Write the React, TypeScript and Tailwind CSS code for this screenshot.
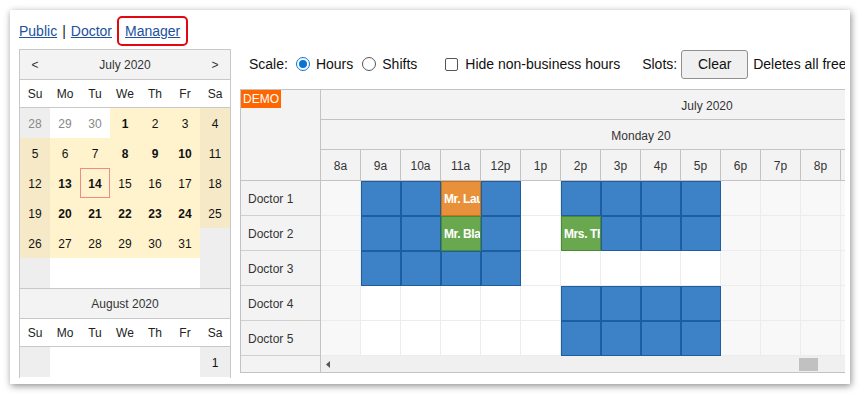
import React from "react";

type Cell = { d?: number; k: "in" | "inWe" | "out" | "outWe"; b?: boolean; t?: boolean; g?: boolean };

const july: Cell[][] = [
  [{ d: 28, k: "outWe", g: true }, { d: 29, k: "out", g: true }, { d: 30, k: "out", g: true }, { d: 1, k: "in", b: true }, { d: 2, k: "in" }, { d: 3, k: "in" }, { d: 4, k: "inWe" }],
  [{ d: 5, k: "inWe" }, { d: 6, k: "in" }, { d: 7, k: "in" }, { d: 8, k: "in", b: true }, { d: 9, k: "in", b: true }, { d: 10, k: "in", b: true }, { d: 11, k: "inWe" }],
  [{ d: 12, k: "inWe" }, { d: 13, k: "in", b: true }, { d: 14, k: "in", b: true, t: true }, { d: 15, k: "in" }, { d: 16, k: "in" }, { d: 17, k: "in" }, { d: 18, k: "inWe" }],
  [{ d: 19, k: "inWe" }, { d: 20, k: "in", b: true }, { d: 21, k: "in", b: true }, { d: 22, k: "in", b: true }, { d: 23, k: "in", b: true }, { d: 24, k: "in", b: true }, { d: 25, k: "inWe" }],
  [{ d: 26, k: "inWe" }, { d: 27, k: "in" }, { d: 28, k: "in" }, { d: 29, k: "in" }, { d: 30, k: "in" }, { d: 31, k: "in" }, { k: "outWe" }],
  [{ k: "outWe" }, { k: "out" }, { k: "out" }, { k: "out" }, { k: "out" }, { k: "out" }, { k: "outWe" }],
];

const august: Cell[][] = [
  [{ k: "outWe" }, { k: "out" }, { k: "out" }, { k: "out" }, { k: "out" }, { k: "out" }, { d: 1, k: "outWe" }],
];

const dayNames = ["Su", "Mo", "Tu", "We", "Th", "Fr", "Sa"];

function bgFor(k: Cell["k"]) {
  if (k === "in") return "bg-[#fff3ce]";
  if (k === "inWe") return "bg-[#f5e9c8]";
  if (k === "outWe") return "bg-[#eeeeee]";
  return "bg-white";
}

function Month({ title, nav, weeks, top }: { title: string; nav: boolean; weeks: Cell[][]; top?: boolean }) {
  return (
    <div className={top ? "" : "border-t border-[#c8c8c8]"}>
      <div className="grid grid-cols-7 h-[30px] items-center bg-[#f3f3f3] border-b border-[#c8c8c8] text-[12px] text-[#333]">
        <div className="text-center">{nav ? "<" : ""}</div>
        <div className="col-span-5 text-center">{title}</div>
        <div className="text-center">{nav ? ">" : ""}</div>
      </div>
      <div className="grid grid-cols-7 h-[28px] items-center bg-white border-b border-[#c8c8c8] text-[12px] text-[#222]">
        {dayNames.map((n) => (
          <div key={n} className="text-center">{n}</div>
        ))}
      </div>
      {weeks.map((w, i) => (
        <div key={i} className="grid grid-cols-7 h-[30px]">
          {w.map((c, j) => (
            <div
              key={j}
              className={`${bgFor(c.k)} flex items-center justify-center pt-[1px] text-[12px] ${c.g ? "text-[#888]" : "text-[#111]"} ${c.b ? "font-bold" : ""} ${c.t ? "border border-[#f08a8a]" : ""}`}
            >
              {c.d ?? ""}
            </div>
          ))}
        </div>
      ))}
    </div>
  );
}

const hours = ["8a", "9a", "10a", "11a", "12p", "1p", "2p", "3p", "4p", "5p", "6p", "7p", "8p", "9p", "10p", "11p"];

type Slot = "s" | { c: "o" | "g"; text: string };

const rows: { name: string; slots: Record<number, Slot> }[] = [
  { name: "Doctor 1", slots: { 1: "s", 2: "s", 3: { c: "o", text: "Mr. Laurent" }, 4: "s", 6: "s", 7: "s", 8: "s", 9: "s" } },
  { name: "Doctor 2", slots: { 1: "s", 2: "s", 3: { c: "g", text: "Mr. Black" }, 4: "s", 6: { c: "g", text: "Mrs. Thompson" }, 7: "s", 8: "s", 9: "s" } },
  { name: "Doctor 3", slots: { 1: "s", 2: "s", 3: "s", 4: "s" } },
  { name: "Doctor 4", slots: { 6: "s", 7: "s", 8: "s", 9: "s" } },
  { name: "Doctor 5", slots: { 6: "s", 7: "s", 8: "s", 9: "s" } },
];

function GridCell({ idx, slot }: { idx: number; slot?: Slot }) {
  const business = idx >= 1 && idx <= 9;
  if (slot === "s") {
    return <div className="w-[40px] h-[35px] shrink-0 bg-[#3d82c6] border border-[#1c5e9f]" />;
  }
  if (slot) {
    const cls =
      slot.c === "o"
        ? "bg-[#e8913a] border-[#c8731c]"
        : "bg-[#6aa84f] border-[#4b8a2f]";
    return (
      <div className={`w-[40px] h-[35px] shrink-0 border ${cls} overflow-hidden whitespace-nowrap flex items-center pl-[2px] pt-[1px] text-[12px] font-bold tracking-[-0.4px] text-white`}>
        {slot.text}
      </div>
    );
  }
  return (
    <div
      className={`w-[40px] h-[35px] shrink-0 border-r border-b border-[#ececec] ${business ? "bg-white" : "bg-[#f8f8f8]"}`}
    />
  );
}

function Radio({ on }: { on?: boolean }) {
  return (
    <span
      className={`w-[14px] h-[14px] rounded-full border flex items-center justify-center bg-white shrink-0 ${on ? "border-[#0a74d6]" : "border-[#555]"}`}
    >
      {on ? <span className="w-[8px] h-[8px] rounded-full bg-[#0a74d6]" /> : null}
    </span>
  );
}

export default function App() {
  return (
    <div className="w-[860px] h-[394px] bg-white pt-[10px] pl-[10px]" style={{ fontFamily: '"Liberation Sans", Arial, sans-serif' }}>
      <div className="w-[840px] h-[374px] bg-white shadow-[1px_2px_7px_rgba(0,0,0,0.45)] pl-[9px] pt-[6px] overflow-hidden">
        <div className="h-[30px] flex items-center text-[14px] text-[#2150a0]">
          <a className="underline">Public</a>
          <span className="mx-[5px] text-[#222]">|</span>
          <a className="underline">Doctor</a>
          <span className="ml-[5px] h-[30px] flex items-center px-[6px] border-2 border-[#e30613] rounded-[5px] underline">Manager</span>
        </div>
        <div className="flex mt-[3px]">
          <div className="w-[212px] h-[329px] overflow-hidden border-t border-l border-r border-[#c8c8c8] shrink-0">
            <Month title="July 2020" nav weeks={july} top />
            <Month title="August 2020" nav={false} weeks={august} />
          </div>
          <div className="ml-[9px] w-[605px] overflow-hidden shrink-0">
            <div className="h-[30px] flex items-center text-[14px] text-[#111] whitespace-nowrap pl-[9px]">
              <span>Scale:</span>
              <span className="ml-[8px]"><Radio on /></span>
              <span className="ml-[6px]">Hours</span>
              <span className="ml-[9px]"><Radio /></span>
              <span className="ml-[6px]">Shifts</span>
              <span className="ml-[10px] w-px h-[20px] bg-[#d0d0d0]" />
              <span className="ml-[18px] w-[13px] h-[13px] border border-[#555] rounded-[2px] bg-white shrink-0" />
              <span className="ml-[7px]">Hide non-business hours</span>
              <span className="ml-[8px] w-px h-[20px] bg-[#d0d0d0]" />
              <span className="ml-[14px]">Slots:</span>
              <span className="ml-[4px] w-[67px] h-[29px] shrink-0 flex items-center justify-center bg-[#f0f0f0] border border-[#8f8f8f] rounded-[3px]">Clear</span>
              <span className="ml-[5px]">Deletes all free slots in this view</span>
            </div>
            <div className="mt-[10px] flex border-t border-b border-l border-[#c3c3c3] text-[12px] text-[#333]">
              <div className="w-[80px] shrink-0 bg-[#f3f3f3] border-r border-[#c3c3c3]">
                <div className="h-[91px] border-b border-[#c3c3c3] relative">
                  <span className="absolute left-0 top-0 bg-[#ff6600] text-white px-[2px] h-[18px] flex items-center text-[12px]">DEMO</span>
                </div>
                {rows.map((r) => (
                  <div key={r.name} className="h-[35px] border-b border-[#cfcfcf] flex items-center pl-[7px] pt-[2px]">{r.name}</div>
                ))}
                <div className="h-[16px]" />
              </div>
              <div className="w-[524px] overflow-hidden">
                <div className="bg-[#f3f3f3]">
                  <div className="h-[30px] w-[772px] border-b border-[#c3c3c3] flex items-center justify-center pt-[2px]">July 2020</div>
                  <div className="h-[30px] w-[640px] border-b border-[#c3c3c3] flex items-center justify-center pt-[2px]">Monday 20</div>
                  <div className="h-[31px] flex border-b border-[#c3c3c3] w-[640px]">
                    {hours.map((h) => (
                      <div key={h} className="w-[40px] shrink-0 border-r border-[#c3c3c3] flex items-center justify-center pt-[2px]">{h}</div>
                    ))}
                  </div>
                </div>
                {rows.map((r) => (
                  <div key={r.name} className="flex w-[640px]">
                    {hours.map((h, i) => (
                      <GridCell key={h} idx={i} slot={r.slots[i]} />
                    ))}
                  </div>
                ))}
                <div className="h-[16px] bg-[#f0f0f0] flex items-center">
                  <svg width="4" height="7" viewBox="0 0 4 7" className="ml-[5px]">
                    <path d="M4 0 L0 3.5 L4 7 Z" fill="#555" />
                  </svg>
                  <span className="ml-[469px] w-[19px] h-[13px] bg-[#c1c1c1]" />
                </div>
              </div>
            </div>
          </div>
        </div>
      </div>
    </div>
  );
}
